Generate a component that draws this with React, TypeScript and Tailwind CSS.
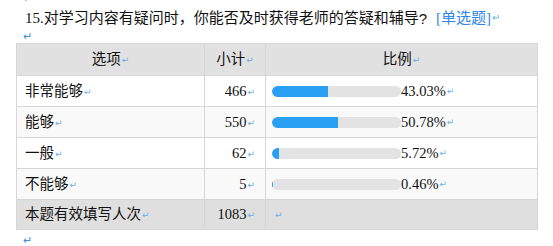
import React from "react";

const Mark: React.FC<{ className?: string }> = ({ className = "" }) => (
  <span
    className={`text-[9px] leading-none text-[#6aaeea] align-middle ml-[1px] ${className}`}
    style={{ fontFamily: '"DejaVu Sans", sans-serif' }}
  >
    ↵
  </span>
);

type Row = { label: string; count: number; pct: number };

const rows: Row[] = [
  { label: "非常能够", count: 466, pct: 43.03 },
  { label: "能够", count: 550, pct: 50.78 },
  { label: "一般", count: 62, pct: 5.72 },
  { label: "不能够", count: 5, pct: 0.46 },
];

const Bar: React.FC<{ pct: number }> = ({ pct }) => (
  <div className="w-[129px] h-[11px] rounded-full bg-[#e3e3e3] overflow-hidden shrink-0">
    <div
      className="h-full rounded-l-full bg-[#2aa0f4]"
      style={{ width: `${pct}%` }}
    />
  </div>
);

export default function App() {
  return (
    <div
      className="w-[553px] h-[246px] bg-white text-[#111] overflow-hidden"
      style={{ fontFamily: '"Liberation Serif", "Noto Sans CJK SC", serif' }}
    >
      {/* paragraph mark of the line above, mostly scrolled off */}
      <div className="h-[4px] pl-[23px] flex items-end overflow-hidden">
        <span className="text-[11px] leading-none text-[#3d8fe0]">↵</span>
      </div>

      {/* Question title */}
      <div className="pl-[25px] h-[22px] flex items-center text-[15px] leading-none mt-[3px]">
        <span>15.对学习内容有疑问时，你能否及时获得老师的答疑和辅导</span>
        <span style={{ fontFamily: '"Liberation Sans", sans-serif' }}>?</span>
        <span className="text-[#2f86e8] ml-[9px]">[单选题]</span>
        <span className="text-[10px] text-[#6aaeea] ml-[1px]">↵</span>
      </div>
      <div className="pl-[23px] h-[14px] flex items-center">
        <span className="text-[11px] leading-none text-[#3d8fe0]">↵</span>
      </div>

      {/* Table */}
      <table className="ml-[16px] border-collapse text-[14.5px] leading-none">
        <thead>
          <tr className="h-[32px] bg-[#e1e1e1]">
            <th className="w-[188px] border border-[#d6d6d6] font-normal text-center">
              选项<Mark />
            </th>
            <th className="w-[61px] border border-[#d6d6d6] font-normal text-center">
              小计<Mark />
            </th>
            <th className="w-[272px] border border-[#d6d6d6] font-normal text-center">
              比例<Mark />
            </th>
          </tr>
        </thead>
        <tbody>
          {rows.map((r, i) => (
            <tr
              key={r.label}
              className={`h-[31px] ${i % 2 === 1 ? "bg-[#f9f9f9]" : "bg-white"}`}
            >
              <td className="border border-[#d6d6d6] pl-[8px]">
                {r.label}
                <Mark />
              </td>
              <td className="border border-[#d6d6d6] text-right pr-[10px]">
                {r.count}
                <Mark />
              </td>
              <td className="border border-[#d6d6d6] pl-[6px]">
                <div className="flex items-center">
                  <Bar pct={r.pct} />
                  <span>{r.pct.toFixed(2)}%</span>
                  <Mark />
                </div>
              </td>
            </tr>
          ))}
          <tr className="h-[30px] bg-[#dfdfdf]">
            <td className="border border-[#d6d6d6] pl-[8px]">
              本题有效填写人次
              <Mark />
            </td>
            <td className="border border-[#d6d6d6] text-right pr-[10px]">
              1083
              <Mark />
            </td>
            <td className="border border-[#d6d6d6] pl-[8px]">
              <Mark />
            </td>
          </tr>
        </tbody>
      </table>

      <div className="pl-[23px] h-[16px] flex items-center mt-[2px]">
        <span className="text-[11px] leading-none text-[#3d8fe0]">↵</span>
      </div>
    </div>
  );
}
